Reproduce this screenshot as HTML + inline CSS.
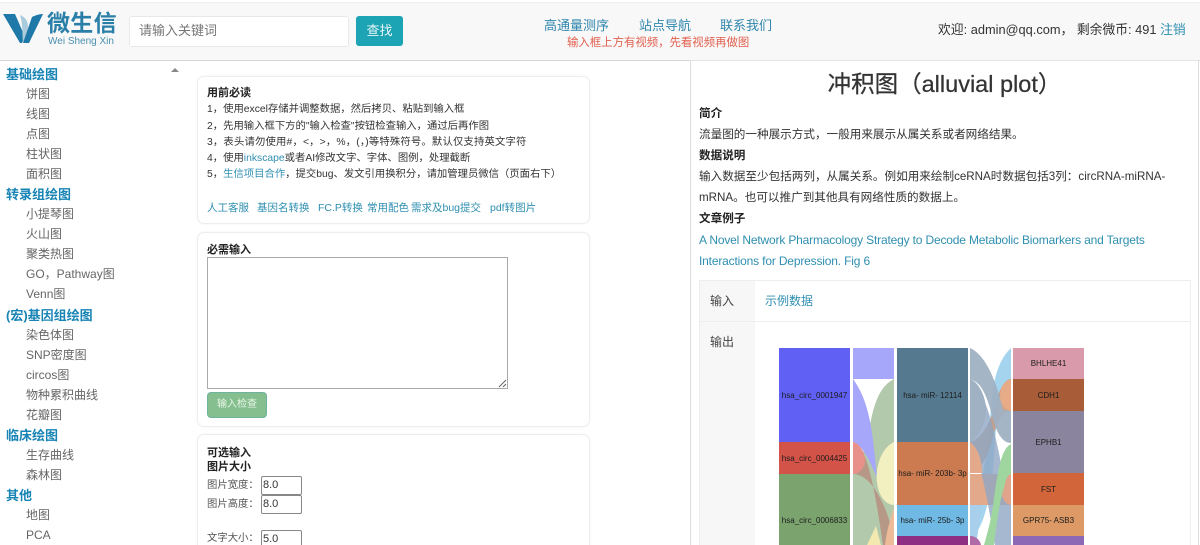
<!DOCTYPE html>
<html lang="zh"><head><meta charset="utf-8"><title>冲积图</title>
<style>
html,body{margin:0;padding:0;width:1200px;height:545px;overflow:hidden;background:#fff;color:#333;font-family:"Liberation Sans","Noto Sans CJK SC",sans-serif}
#wrap{position:relative;width:1200px;height:545px;overflow:hidden;background:#fff}
.a{position:absolute;white-space:nowrap}
a{color:#2f8fb0;text-decoration:none}
#nav{position:absolute;left:0;top:2px;width:1200px;height:57px;background:#f8f8f8;border-bottom:1px solid #d8d8d8;border-top:1px solid #eee}
.side{font-size:12px;color:#666;left:26px;line-height:20px}
.h{font-size:13px;font-weight:bold;color:#1784b5;left:6px;line-height:20px}
.card{position:absolute;left:197px;width:391px;background:#fff;border:1px solid #eee;border-radius:7px;box-shadow:0 0 2px #f2f2f2}
.t{font-size:10.35px;color:#333;left:207px;line-height:16px}
.b{font-weight:bold;font-size:11px;color:#222}
.lnk{font-size:10.5px;color:#2f8fb0;top:200px;line-height:16px}
.r{font-size:11.6px;left:699px;line-height:21px;color:#333}
.rb{font-weight:bold;color:#222}
.inp{position:absolute;left:261px;width:38px;height:17px;border:1px solid #888;border-radius:2px;font-size:11px;line-height:17px;padding-left:1px;color:#333;background:#fff}
.seg{position:absolute;text-align:center;font-size:8px;color:#1c1c1c;display:flex;align-items:center;justify-content:center;white-space:nowrap}
</style></head><body><div id="wrap">
<div id="nav"></div>
<svg class="a" style="left:3px;top:12px" width="42" height="33" viewBox="0 0 42 33">
<path d="M0 2H12L22 25L19 31H17Z" fill="#1f79a8"/>
<path d="M17 3C22 5 25 9 25 14C25 20 23 26 20 30C19 22 20 12 17 3Z" fill="#a9cbdb"/>
<path d="M40 2L26 31H20L29 5C33 3 37 2 40 2Z" fill="#1f79a8"/>
</svg>
<div class="a" style="left:47px;top:9px;font-size:23px;font-weight:bold;color:#2a7fa8;line-height:28px;letter-spacing:.3px">微生信</div>
<div class="a" style="left:48px;top:35px;font-size:10px;color:#4a8fb0;line-height:13px">Wei Sheng Xin</div>
<div class="a" style="left:129px;top:16px;width:218px;height:29px;background:#fff;border:1px solid #e8e8e8;border-radius:3px"></div>
<div class="a" style="left:139px;top:21px;font-size:13px;color:#777;line-height:20px">请输入关键词</div>
<div class="a" style="left:356px;top:16px;width:47px;height:30px;background:#1ca3b4;border-radius:3px;color:#e8f7f9;font-size:13px;line-height:30px;text-align:center">查找</div>
<a class="a" style="left:544px;top:16px;font-size:13px;line-height:20px;color:#2f86ad">高通量测序</a>
<a class="a" style="left:639px;top:16px;font-size:13px;line-height:20px;color:#2f86ad">站点导航</a>
<a class="a" style="left:720px;top:16px;font-size:13px;line-height:20px;color:#2f86ad">联系我们</a>
<div class="a" style="left:567px;top:35px;font-size:11.4px;line-height:17px;color:#e2604f">输入框上方有视频，先看视频再做图</div>
<div class="a" style="left:938px;top:20px;font-size:12.8px;line-height:20px;color:#333">欢迎: admin@qq.com， 剩余微币: 491 <a style="color:#2f8fb0">注销</a></div>

<div class="a" style="left:171px;top:68px;width:0;height:0;border-left:4px solid transparent;border-right:4px solid transparent;border-bottom:4px solid #888"></div>
<div class="a" style="left:690px;top:60px;width:509px;height:485px;border-left:1px solid #ddd;border-right:1px solid #ddd;border-top:1px solid #e4e4e4;box-sizing:border-box"></div>

<div class="a h" style="top:65px">基础绘图</div>
<div class="a side" style="top:84px">饼图</div><div class="a side" style="top:104px">线图</div><div class="a side" style="top:124px">点图</div><div class="a side" style="top:144px">柱状图</div><div class="a side" style="top:164px">面积图</div>
<div class="a h" style="top:185px">转录组绘图</div>
<div class="a side" style="top:204px">小提琴图</div><div class="a side" style="top:224px">火山图</div><div class="a side" style="top:244px">聚类热图</div><div class="a side" style="top:264px">GO，Pathway图</div><div class="a side" style="top:284px">Venn图</div>
<div class="a h" style="top:306px">(宏)基因组绘图</div>
<div class="a side" style="top:325px">染色体图</div><div class="a side" style="top:345px">SNP密度图</div><div class="a side" style="top:365px">circos图</div><div class="a side" style="top:385px">物种累积曲线</div><div class="a side" style="top:405px">花瓣图</div>
<div class="a h" style="top:426px">临床绘图</div>
<div class="a side" style="top:445px">生存曲线</div><div class="a side" style="top:465px">森林图</div>
<div class="a h" style="top:486px">其他</div>
<div class="a side" style="top:505px">地图</div><div class="a side" style="top:525px">PCA</div>

<div class="card" style="top:76px;height:146px"></div>
<div class="a t b" style="top:85px">用前必读</div>
<div class="a t" style="top:102px">1，使用excel存储并调整数据，然后拷贝、粘贴到输入框</div>
<div class="a t" style="top:119px">2，先用输入框下方的"输入检查"按钮检查输入，通过后再作图</div>
<div class="a t" style="top:135px;letter-spacing:.17px">3，表头请勿使用#，&lt;，&gt;，%，(，)等特殊符号。默认仅支持英文字符</div>
<div class="a t" style="top:151px">4，使用<a>inkscape</a>或者AI修改文字、字体、图例，处理截断</div>
<div class="a t" style="top:167px">5，<a>生信项目合作</a>，提交bug、发文引用换积分，请加管理员微信（页面右下）</div>
<a class="a lnk" style="left:207px">人工客服</a><a class="a lnk" style="left:257px">基因名转换</a><a class="a lnk" style="left:318px">FC.P转换</a><a class="a lnk" style="left:367px">常用配色</a><a class="a lnk" style="left:411px">需求及bug提交</a><a class="a lnk" style="left:490px">pdf转图片</a>

<div class="card" style="top:232px;height:193px"></div>
<div class="a t b" style="top:242px">必需输入</div>
<div class="a" style="left:207px;top:257px;width:299px;height:130px;border:1px solid #aaa;background:#fff"></div>
<svg class="a" style="left:497px;top:378px" width="10" height="10"><path d="M9 2L2 9M9 6L6 9" stroke="#666" fill="none"/></svg>
<div class="a" style="left:207px;top:392px;width:60px;height:26px;background:#86bf8f;border:1px solid #6fb2a0;box-sizing:border-box;border-radius:4px;color:#e6f5e6;font-size:10px;line-height:24px;text-align:center">输入检查</div>

<div class="card" style="top:434px;height:130px"></div>
<div class="a t b" style="top:445px">可选输入</div>
<div class="a t b" style="top:459px">图片大小</div>
<div class="a t" style="top:478px;color:#555">图片宽度：</div><div class="inp" style="top:476px">8.0</div>
<div class="a t" style="top:497px;color:#555">图片高度：</div><div class="inp" style="top:495px">8.0</div>
<div class="a t" style="top:531px;color:#555">文字大小：</div><div class="inp" style="top:530px">5.0</div>

<div class="a" style="left:691px;width:507px;top:66px;text-align:center;font-size:23.5px;line-height:36px;color:#333;-webkit-text-stroke:.25px #333">冲积图（alluvial plot）</div>
<div class="a r rb" style="top:103px">简介</div>
<div class="a r" style="top:124px">流量图的一种展示方式，一般用来展示从属关系或者网络结果。</div>
<div class="a r rb" style="top:145px">数据说明</div>
<div class="a r" style="top:166px">输入数据至少包括两列，从属关系。例如用来绘制ceRNA时数据包括3列：circRNA-miRNA-</div>
<div class="a r" style="top:187px">mRNA。也可以推广到其他具有网络性质的数据上。</div>
<div class="a r rb" style="top:208px">文章例子</div>
<a class="a r" style="top:230px;color:#2f8fb0;font-size:12px;letter-spacing:-.17px">A Novel Network Pharmacology Strategy to Decode Metabolic Biomarkers and Targets</a>
<a class="a r" style="top:251px;color:#2f8fb0;font-size:12px;letter-spacing:-.17px">Interactions for Depression. Fig 6</a>

<div class="a" style="left:699px;top:280px;width:492px;height:265px;border:1px solid #eee;border-bottom:0;box-sizing:border-box"></div>
<div class="a" style="left:700px;top:281px;width:55px;height:264px;background:#f7f7f7"></div>
<div class="a" style="left:700px;top:321px;width:490px;height:1px;background:#eee"></div>
<div class="a" style="left:710px;top:291px;font-size:12px;line-height:20px;color:#444">输入</div>
<div class="a" style="left:710px;top:332px;font-size:12px;line-height:20px;color:#444">输出</div>
<a class="a" style="left:765px;top:291px;font-size:12px;line-height:20px;color:#2f8fb0">示例数据</a>

<div class="seg" style="left:779px;top:348px;width:71px;height:94px;background:#6060f4">hsa_circ_0001947</div>
<div class="seg" style="left:779px;top:442px;width:71px;height:32px;background:#d35349">hsa_circ_0004425</div>
<div class="seg" style="left:779px;top:474px;width:71px;height:93px;background:#7ba36e">hsa_circ_0006833</div>
<div class="seg" style="left:897px;top:348px;width:71px;height:94px;background:#55798f">hsa- miR- 12114</div>
<div class="seg" style="left:897px;top:442px;width:71px;height:63px;background:#cc7a4f">hsa- miR- 203b- 3p</div>
<div class="seg" style="left:897px;top:505px;width:71px;height:31px;background:#6fb9e4">hsa- miR- 25b- 3p</div>
<div class="seg" style="left:897px;top:536px;width:71px;height:9px;background:#8f2f83"></div>
<div class="seg" style="left:1013px;top:348px;width:71px;height:31px;background:#d99bac">BHLHE41</div>
<div class="seg" style="left:1013px;top:379px;width:71px;height:32px;background:#a85c38">CDH1</div>
<div class="seg" style="left:1013px;top:411px;width:71px;height:62px;background:#8b849f">EPHB1</div>
<div class="seg" style="left:1013px;top:473px;width:71px;height:32px;background:#d2653a">FST</div>
<div class="seg" style="left:1013px;top:505px;width:71px;height:31px;background:#dd9a66">GPR75- ASB3</div>
<div class="seg" style="left:1013px;top:536px;width:71px;height:9px;background:#8c68b5"></div>

<svg class="a" style="left:853px;top:348px" width="41" height="197" viewBox="0 0 41 197">
<path d="M0 0H41V31H0Z" fill="#a6a6fa"/>
<path d="M41 31C22 40 18 70 14 95L0 126V197H41Z" fill="#b3c9ac"/>
<path d="M0 31C18 55 20 90 24 130C16 110 8 96 0 94Z" fill="#a6a6fa"/>
<path d="M41 94C28 100 22 120 24 135C26 150 34 157 41 157Z" fill="#f2efc0"/>
<path d="M0 94C14 100 20 130 30 197H41V190C32 150 16 126 0 126Z" fill="#b5887a" opacity=".75"/>
<path d="M0 94C8 96 12 106 12 112C12 120 6 126 0 126Z" fill="#e8908a"/>
<path d="M14 197L23 178L28 197Z" fill="#f2e8b0"/>
<path d="M32 197C34 180 38 170 41 160V197Z" fill="#eebb99"/>
</svg>

<svg class="a" style="left:970px;top:348px" width="41" height="197" viewBox="0 0 41 197">
<path d="M41 0C30 10 24 28 22 50C18 90 14 150 0 157V188C10 188 20 160 24 110C26 70 30 40 41 31Z" fill="#a4d4ee"/>
<path d="M0 157H12C10 170 8 185 6 197H0Z" fill="#a8cfec"/>
<path d="M0 94C12 92 22 70 26 55C30 38 36 31 41 31V63C34 63 28 72 24 85C20 105 10 125 0 125Z" fill="#c99478" opacity=".85"/>
<path d="M0 126H41V157H0Z" fill="#e2a98a"/>
<path d="M0 0C18 8 28 40 33 62L41 63V95C30 95 24 78 20 60C14 40 8 34 2 32L0 31Z" fill="#9fb1c3" opacity=".95"/>
<path d="M0 31C14 40 24 80 30 110C34 140 36 155 41 157V197H25C20 170 14 120 0 94Z" fill="#8ea6c4" opacity=".8"/>
<path d="M0 31C12 36 17 55 16 66C14 80 6 92 0 94Z" fill="#9fb1c3"/>
<path d="M41 31C34 33 30 40 30 47C30 56 35 62 41 63Z" fill="#e8ab88"/>
<path d="M41 125C34 128 31 135 31 141C31 150 36 157 41 157Z" fill="#dfa489"/>
<path d="M0 94C8 100 12 112 12 125H0Z" fill="#e2a98a"/>
<path d="M41 96C32 100 28 120 24 150C22 170 16 190 14 197H24C26 180 30 150 34 140C36 130 38 127 41 126Z" fill="#9fd69f"/>
<path d="M0 188C6 188 10 192 11 197H0Z" fill="#b06aa8"/>
</svg>
</div></body></html>
